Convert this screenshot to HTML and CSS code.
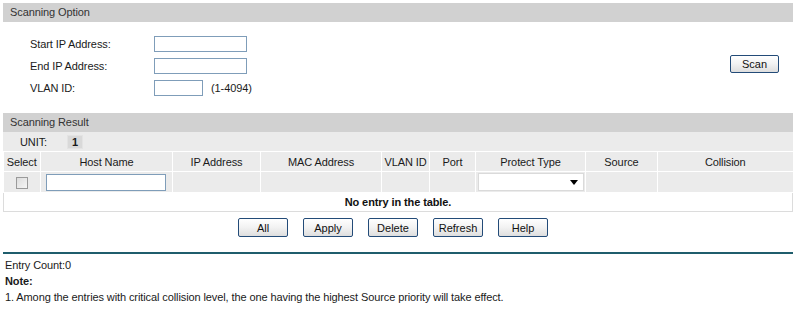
FILE: index.html
```html
<!DOCTYPE html>
<html lang="en">
<head>
  <meta charset="UTF-8">
  <title>IP-MAC Binding Scan</title>
  <link rel="stylesheet" href="styles.css">
</head>
<body>
  <div class="page">
    <div class="bar">Scanning Option</div>
    <div class="options">
      <div class="fields">
        <label for="startIp">Start IP Address:</label>
        <div><input type="text" id="startIp" class="ip"></div>
        <label for="endIp">End IP Address:</label>
        <div><input type="text" id="endIp" class="ip"></div>
        <label for="vlan">VLAN ID:</label>
        <div><input type="text" id="vlan" class="vid"><span class="hint">(1-4094)</span></div>
      </div>
      <button class="btn">Scan</button>
    </div>

    <div class="bar">Scanning Result</div>
    <div class="unit">
      <span class="unit-label">UNIT:</span>
      <span class="unit-box">1</span>
    </div>
    <table class="result">
      <colgroup>
        <col style="width:37px"><col style="width:132px"><col style="width:88px">
        <col style="width:121px"><col style="width:48px"><col style="width:46px">
        <col style="width:110px"><col style="width:72px"><col>
      </colgroup>
      <tr class="head">
        <td>Select</td>
        <td>Host Name</td>
        <td>IP Address</td>
        <td>MAC Address</td>
        <td>VLAN ID</td>
        <td>Port</td>
        <td>Protect Type</td>
        <td>Source</td>
        <td>Collision</td>
      </tr>
      <tr class="edit">
        <td><input type="checkbox" class="chk"></td>
        <td class="left"><input type="text" class="host"></td>
        <td></td>
        <td></td>
        <td></td>
        <td></td>
        <td>
          <div class="drop">
            <select></select>
            <span class="arrow"></span>
          </div>
        </td>
        <td></td>
        <td></td>
      </tr>
      <tr class="empty">
        <td colspan="9">No entry in the table.</td>
      </tr>
    </table>

    <div class="actions">
      <button class="btn">All</button>
      <button class="btn">Apply</button>
      <button class="btn">Delete</button>
      <button class="btn">Refresh</button>
      <button class="btn">Help</button>
    </div>

    <hr class="line">

    <div class="notes">
      <p>Entry Count:0</p>
      <p><b>Note:</b></p>
      <p>1. Among the entries with critical collision level, the one having the highest Source priority will take effect.</p>
    </div>
  </div>
</body>
</html>
```

FILE: styles.css
```css
html, body {
  margin: 0;
  padding: 0;
  background: #fff;
}

body {
  font-family: "Liberation Sans", Arial, sans-serif;
  font-size: 11px;
  letter-spacing: -0.1px;
  color: #1a1a1a;
}

.page {
  width: 790px;
  padding: 3px 0 0 3px;
}

.bar {
  height: 19px;
  line-height: 19px;
  background-color: #d1d1d1;
  color: #333;
  padding-left: 7px;
}

.options {
  display: flex;
  justify-content: space-between;
  align-items: center;
  padding: 11px 14px 14px 26px;
}

.fields {
  display: grid;
  grid-template-columns: 125px auto;
  grid-auto-rows: 22px;
  align-items: center;
}

.fields > div {
  display: flex;
  align-items: center;
}

.fields label {
  padding-left: 1px;
}

.fields input {
  height: 16px;
  box-sizing: border-box;
  border: 1px solid #7f9db9;
  padding: 0 2px;
  font: inherit;
  margin: 0;
}

.ip {
  width: 93px;
}

.vid {
  width: 49px;
}

.hint {
  padding-left: 8px;
}

.btn {
  width: 50px;
  height: 19px;
  padding: 0;
  font: inherit;
  color: #111;
  background: linear-gradient(#ffffff, #f2f2f2 50%, #dedede);
  border: 1px solid #234b78;
  border-radius: 2px;
}

.options .btn {
  height: 18px;
  width: 49px;
  margin-top: -4px;
}

.unit {
  height: 19px;
  display: flex;
  align-items: center;
  background-color: #ebebeb;
  border-bottom: 1px solid #fff;
}

.unit-label {
  width: 47px;
  padding-left: 17px;
}

.unit-box {
  width: 14px;
  height: 12px;
  line-height: 12px;
  text-align: center;
  font-weight: bold;
  background-color: #d9d9d9;
  border: 1px solid #e3e3e3;
}

.result {
  width: 790px;
  border-collapse: collapse;
  table-layout: fixed;
}

.result td {
  background-color: #ebebeb;
  border: 1px solid #fff;
  text-align: center;
  padding: 0;
  white-space: nowrap;
}

.result tr.head td {
  height: 19px;
  border-top: none;
}

.result tr.head td:first-child,
.result tr.edit td:first-child {
  border-left: none;
}

.result tr.head td:last-child,
.result tr.edit td:last-child {
  border-right: none;
}

.result tr.edit td {
  height: 20px;
}

.result td.left {
  text-align: left;
  padding-left: 5px;
}

.chk {
  appearance: none;
  width: 12px;
  height: 12px;
  margin: 3px 0 0;
  border: 1px solid #9a9a9a;
  background: linear-gradient(135deg, #dcdcdc, #f6f6f6);
  box-sizing: border-box;
}

.host {
  width: 120px;
  height: 17px;
  box-sizing: border-box;
  border: 1px solid #7f9db9;
  margin: 1px 0 0;
  display: block;
}

.drop {
  position: relative;
  width: 106px;
  height: 18px;
  margin: 0 auto;
}

.drop select {
  appearance: none;
  width: 100%;
  height: 18px;
  border: 1px solid #dadada;
  background: #fff;
  display: block;
}

.arrow {
  position: absolute;
  right: 6px;
  top: 7px;
  border-left: 4px solid transparent;
  border-right: 4px solid transparent;
  border-top: 5px solid #000;
}

.result tr.empty td {
  background-color: #fff;
  border: 1px solid #dcdcdc;
  height: 18px;
  font-weight: bold;
  color: #111;
}

.actions {
  display: flex;
  justify-content: center;
  gap: 15px;
  padding: 6px 10px 0 0;
}

.line {
  margin: 15px 0 0;
  border: none;
  height: 2px;
  background-color: #1f5d6c;
}

.notes {
  padding-top: 3px;
}

.notes p {
  margin: 0 0 0 2px;
  line-height: 16px;
}
```
